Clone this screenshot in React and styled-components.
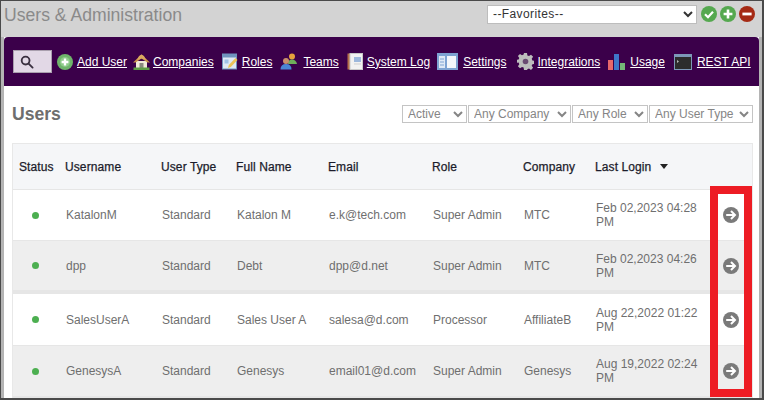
import React from 'react';
import styled, { createGlobalStyle } from 'styled-components';

const GlobalStyle = createGlobalStyle`
  html, body {
    margin: 0;
    padding: 0;
    background: #ffffff;
    font-family: "Liberation Sans", Arial, sans-serif;
  }
`;

const Frame = styled.div`
  position: relative;
  box-sizing: border-box;
  width: 764px;
  height: 400px;
  overflow: hidden;
  background: #d3d3d3;
  border-top: 1px solid #4a4a4a;
  border-left: 1px solid #4a4a4a;
  border-right: 2px solid #4a4a4a;
  border-bottom: 2px solid #4a4a4a;
  padding: 0 3px 0 3px;
`;

const TopBar = styled.div`
  display: flex;
  align-items: center;
  justify-content: space-between;
  height: 26px;
  padding-bottom: 10px;
`;

const PageTitle = styled.h1`
  margin: 2px 0 0;
  font-size: 17.6px;
  font-weight: 400;
  color: #8a8a8a;
`;

const Favorites = styled.div`
  display: flex;
  align-items: center;
  gap: 3px;
  margin-right: 4px;
`;

const FavSelect = styled.select`
  width: 210px;
  height: 19px;
  margin-right: 1px;
  padding: 0 0 0 1px;
  border: 1px solid #bdbdbd;
  background: #ffffff;
  color: #333333;
  font: 12px "Liberation Sans", Arial, sans-serif;
  letter-spacing: 0.4px;
  outline: none;
`;

const Content = styled.div`
  background: #ffffff;
  height: 362px;
  box-shadow: -3px 0 0 #b4b4b4, 3px 0 0 #b4b4b4;
`;

const Nav = styled.nav`
  display: flex;
  align-items: center;
  height: 49px;
  padding: 0 6px 0 9px;
  background: #3b004a;
  border-radius: 4px 4px 0 0;
`;

const SearchBox = styled.button`
  display: flex;
  align-items: center;
  width: 39px;
  height: 23px;
  padding: 0 0 0 6px;
  border: 1px solid #a99fae;
  background: #e2d8e6;
  box-sizing: border-box;
`;

const NavItem = styled.div`
  display: flex;
  align-items: center;
  margin-left: ${(p) => p.$before}px;
  gap: ${(p) => p.$gap}px;
`;

const NavLink = styled.a`
  color: #ffffff;
  font-size: 12px;
  text-decoration: underline;
  white-space: nowrap;
  cursor: pointer;
`;

const HeadRow = styled.div`
  display: flex;
  align-items: center;
  justify-content: space-between;
  height: 57px;
  padding: 0 6px 0 8px;
  box-sizing: border-box;
`;

const SectionTitle = styled.h2`
  margin: 0;
  font-size: 17.6px;
  font-weight: 700;
  color: #6e6e6e;
`;

const Filters = styled.div`
  display: flex;
  gap: 1px;
  margin-bottom: 2px;
`;

const FilterSelect = styled.select`
  width: ${(p) => p.$width}px;
  height: 18px;
  padding: 0 0 0 1px;
  border: 1px solid #c4c4c4;
  background: #ffffff;
  color: #858585;
  font: 12px "Liberation Sans", Arial, sans-serif;
  outline: none;
`;

const Table = styled.div`
  margin: 0 6px 0 8px;
  border: 1px solid #e8e8e8;
  border-bottom: none;
`;

const Row = styled.div`
  display: grid;
  grid-template-columns: 46px 96px 75px 92px 104px 91px 72px 120px 1fr;
  align-items: center;
  padding-left: 6px;
  height: ${(p) => p.$height}px;
  background: ${(p) => p.$bg};
  border-bottom: ${(p) => p.$rule || 1}px solid #e6e6e6;
  box-sizing: border-box;
`;

const HeadCell = styled.div`
  display: flex;
  align-items: center;
  gap: 9px;
  font-size: 12px;
  font-weight: 400;
  color: #1c1c2b;
  letter-spacing: 0.1px;
  -webkit-text-stroke: 0.25px #1c1c2b;
  white-space: nowrap;
`;

const SortCaret = styled.span`
  width: 0;
  height: 0;
  border-left: 4px solid transparent;
  border-right: 4px solid transparent;
  border-top: 5px solid #222222;
`;

const Cell = styled.div`
  padding-left: 1px;
  font-size: 12px;
  line-height: 14px;
  color: #6f6f6f;
`;

const StatusDot = styled.span`
  display: block;
  width: 7px;
  height: 7px;
  margin-left: 13px;
  border-radius: 50%;
  background: #4caf50;
`;

const ActionCell = styled.div`
  display: flex;
  justify-content: flex-end;
  padding-right: 13px;
`;

// annotation drawn over the screenshot
const Callout = styled.div`
  position: absolute;
  left: 709px;
  top: 185px;
  width: 42px;
  height: 211px;
  box-sizing: border-box;
  border: 8px solid #ed1c24;
`;

const SearchIcon = () => (
  <svg width="14" height="14" viewBox="0 0 15 15" fill="none" stroke="#3a3040" strokeWidth="2">
    <circle cx="6" cy="6" r="4.2" />
    <path d="M9.2 9.2 L13.5 13.5" strokeLinecap="round" />
  </svg>
);

const CircleIcon = ({ fill, children, size = 16 }) => (
  <svg width={size} height={size} viewBox="0 0 16 16">
    <circle cx="8" cy="8" r="8" fill={fill} />
    {children}
  </svg>
);

const AddIcon = () => (
  <svg width="16" height="16" viewBox="0 0 16 16">
    <circle cx="8" cy="8" r="8" fill="#6fb46b" />
    <circle cx="8" cy="8" r="5" fill="#8fcb8b" />
    <path d="M8 4.6v6.8M4.6 8h6.8" stroke="#ffffff" strokeWidth="2.4" />
  </svg>
);

const HomeIcon = () => (
  <svg width="17" height="16" viewBox="0 0 17 16">
    <path d="M3 7h11v7H3z" fill="#f0ead8" />
    <path d="M6.5 9h4v5h-4z" fill="#8a8a80" />
    <path d="M0 8.5 L8.5 0.5 L17 8.5 L14.5 8.5 L8.5 4.5 L2.5 8.5z" fill="#c9904a" />
    <path d="M6 2 L8.5 0.5 L11 2 L13 6 L8.5 4.5 L4 6z" fill="#d9a860" />
    <path d="M0.5 13.5h16V16h-16z" fill="#5e9e46" />
  </svg>
);

const RolesIcon = () => (
  <svg width="16" height="17" viewBox="0 0 16 17">
    <rect x="0.5" y="1" width="14" height="15" fill="#dfe9f5" stroke="#6f93bd" />
    <path d="M1 1h13v3.5H1z" fill="#6f93bd" />
    <path d="M2.5 6.5h4v4h-4z" fill="#9fc1e6" />
    <path d="M6 15 L6.8 12 L13.5 5 L15.5 7 L8.8 14z" fill="#edc45a" />
  </svg>
);

const TeamsIcon = () => (
  <svg width="18" height="17" viewBox="0 0 18 17">
    <circle cx="12" cy="3.5" r="3" fill="#e5a13c" />
    <path d="M8 11 q0 -4.5 4 -4.5 q4 0 5 4.5z" fill="#6fae5a" />
    <circle cx="6" cy="8" r="3" fill="#c98f6b" />
    <path d="M0.5 16.5 q0 -5.5 5.5 -5.5 q5.5 0 5.5 5.5z" fill="#4a86d4" />
  </svg>
);

const LogIcon = () => (
  <svg width="16" height="17" viewBox="0 0 16 17">
    <rect x="0.5" y="0.5" width="4" height="16" fill="#b5714a" />
    <rect x="3" y="0.5" width="12.5" height="16" fill="#f2f2f2" stroke="#c8c8c8" />
    <rect x="7" y="4" width="7" height="5" fill="#9db8dc" />
    <path d="M7 11h7" stroke="#cfcfcf" />
  </svg>
);

const SettingsIcon = () => (
  <svg width="21" height="17" viewBox="0 0 21 17">
    <rect x="0" y="0" width="21" height="17" fill="#7ea3d2" />
    <rect x="2" y="3" width="6" height="12" fill="#dfe9f5" />
    <path d="M3 6h4M3 9h4M3 12h4" stroke="#7ea3d2" />
    <rect x="10" y="3" width="9" height="12" fill="#f4f7fb" />
  </svg>
);

const GearIcon = () => (
  <svg width="17" height="17" viewBox="0 0 17 17">
    <path
      d="M7 0h3l.4 2.4 1.6.7 2-1.4 2.1 2.1-1.4 2 .7 1.6 2.4.4v3l-2.4.4-.7 1.6 1.4 2-2.1 2.1-2-1.4-1.6.7L10 17H7l-.4-2.4-1.6-.7-2 1.4-2.1-2.1 1.4-2-.7-1.6L-.8 10V7l2.4-.4.7-1.6-1.4-2 2.1-2.1 2 1.4 1.6-.7z"
      fill="#bdbdbd"
    />
    <circle cx="8.5" cy="8.5" r="2.8" fill="#6a4a72" />
  </svg>
);

const UsageIcon = () => (
  <svg width="17" height="16" viewBox="0 0 17 16">
    <rect x="0" y="6" width="5" height="10" fill="#e8686b" />
    <rect x="6" y="0" width="5" height="16" fill="#3f77c9" />
    <rect x="12" y="9" width="5" height="7" fill="#74b777" />
  </svg>
);

const TerminalIcon = () => (
  <svg width="18" height="16" viewBox="0 0 18 16">
    <rect x="0" y="0" width="18" height="16" fill="#7d98b8" />
    <rect x="1" y="3" width="16" height="12" fill="#2c2c2c" />
    <path d="M3 6 L5 7.5 L3 9z" fill="#b8b8b8" />
  </svg>
);

const ArrowIcon = () => (
  <svg width="16" height="16" viewBox="0 0 16 16">
    <circle cx="8" cy="8" r="8" fill="#7a7a7a" />
    <path d="M3.2 8h8M8 4l4 4-4 4" fill="none" stroke="#ffffff" strokeWidth="2" />
  </svg>
);

const navItems = [
  { label: 'Add User', Icon: AddIcon, before: 5, gap: 4 },
  { label: 'Companies', Icon: HomeIcon, before: 6, gap: 3 },
  { label: 'Roles', Icon: RolesIcon, before: 8, gap: 4 },
  { label: 'Teams', Icon: TeamsIcon, before: 8, gap: 5 },
  { label: 'System Log', Icon: LogIcon, before: 8, gap: 4 },
  { label: 'Settings', Icon: SettingsIcon, before: 7, gap: 5 },
  { label: 'Integrations', Icon: GearIcon, before: 10, gap: 4 },
  { label: 'Usage', Icon: UsageIcon, before: 8, gap: 5 },
  { label: 'REST API', Icon: TerminalIcon, before: 9, gap: 5 },
];

const filters = [
  { label: 'Active', width: 65 },
  { label: 'Any Company', width: 103 },
  { label: 'Any Role', width: 76 },
  { label: 'Any User Type', width: 104 },
];

const columns = ['Status', 'Username', 'User Type', 'Full Name', 'Email', 'Role', 'Company'];

const users = [
  { username: 'KatalonM', type: 'Standard', name: 'Katalon M', email: 'e.k@tech.com', role: 'Super Admin', company: 'MTC', login: 'Feb 02,2023 04:28 PM', height: 51, rule: 1 },
  { username: 'dpp', type: 'Standard', name: 'Debt', email: 'dpp@d.net', role: 'Super Admin', company: 'MTC', login: 'Feb 02,2023 04:26 PM', height: 53, rule: 4 },
  { username: 'SalesUserA', type: 'Standard', name: 'Sales User A', email: 'salesa@d.com', role: 'Processor', company: 'AffiliateB', login: 'Aug 22,2022 01:22 PM', height: 52, rule: 1 },
  { username: 'GenesysA', type: 'Standard', name: 'Genesys', email: 'email01@d.com', role: 'Super Admin', company: 'Genesys', login: 'Aug 19,2022 02:24 PM', height: 52, rule: 2 },
];

export default function App() {
  return (
    <Frame>
      <GlobalStyle />
      <TopBar>
        <PageTitle>Users &amp; Administration</PageTitle>
        <Favorites>
          <FavSelect defaultValue="fav">
            <option value="fav">--Favorites--</option>
          </FavSelect>
          <CircleIcon fill="#55a84f">
            <path d="M4 8.2l3 3 5-5.5" fill="none" stroke="#ffffff" strokeWidth="2.2" />
          </CircleIcon>
          <CircleIcon fill="#55a84f">
            <path d="M8 3.6v8.8M3.6 8h8.8" stroke="#ffffff" strokeWidth="2.6" />
          </CircleIcon>
          <CircleIcon fill="#a52a14">
            <path d="M3.4 8h9.2" stroke="#ffffff" strokeWidth="2.8" />
          </CircleIcon>
        </Favorites>
      </TopBar>
      <Content>
        <Nav>
          <SearchBox>
            <SearchIcon />
          </SearchBox>
          {navItems.map(({ label, Icon, before, gap }) => (
            <NavItem key={label} $before={before} $gap={gap}>
              <Icon />
              <NavLink>{label}</NavLink>
            </NavItem>
          ))}
        </Nav>
        <HeadRow>
          <SectionTitle>Users</SectionTitle>
          <Filters>
            {filters.map((f) => (
              <FilterSelect key={f.label} $width={f.width}>
                <option>{f.label}</option>
              </FilterSelect>
            ))}
          </Filters>
        </HeadRow>
        <Table>
          <Row $height={46} $bg="#f5f6f8">
            {columns.map((c) => (
              <HeadCell key={c}>{c}</HeadCell>
            ))}
            <HeadCell>
              Last Login
              <SortCaret />
            </HeadCell>
          </Row>
          {users.map((u, i) => (
            <Row key={u.username} $height={u.height} $rule={u.rule} $bg={i % 2 ? '#eeeeee' : '#ffffff'}>
              <StatusDot />
              <Cell>{u.username}</Cell>
              <Cell>{u.type}</Cell>
              <Cell>{u.name}</Cell>
              <Cell>{u.email}</Cell>
              <Cell>{u.role}</Cell>
              <Cell>{u.company}</Cell>
              <Cell>{u.login}</Cell>
              <ActionCell>
                <ArrowIcon />
              </ActionCell>
            </Row>
          ))}
        </Table>
      </Content>
      <Callout />
    </Frame>
  );
}
